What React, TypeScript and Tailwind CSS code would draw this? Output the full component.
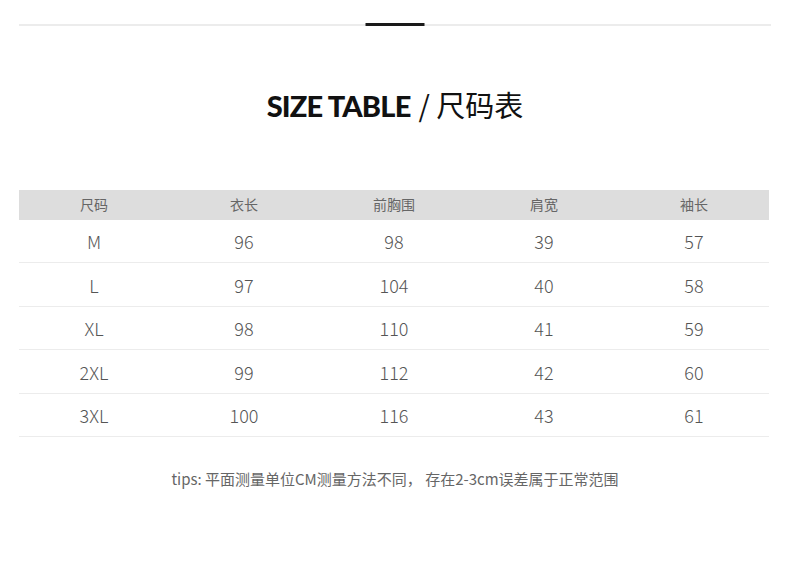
const rows = [
  ["M", "96", "98", "39", "57"],
  ["L", "97", "104", "40", "58"],
  ["XL", "98", "110", "41", "59"],
  ["2XL", "99", "112", "42", "60"],
  ["3XL", "100", "116", "43", "61"],
]

const headers = ["尺码", "衣长", "前胸围", "肩宽", "袖长"]

export default function App() {
  return (
    <div className="h-[569px] w-[790px] bg-white font-['Noto_Sans_CJK_SC','Noto_Sans',sans-serif]">
      <div className="flex justify-center px-[19px] pt-6">
        <div className="relative h-[2px] w-full bg-[#ececec]">
          <div className="absolute left-1/2 top-[-1px] h-[3px] w-[59px] -translate-x-1/2 bg-[#1a1a1a]" />
        </div>
      </div>

      <h1 className="mt-[57px] flex items-baseline justify-center text-[#111]">
        <span className="font-['Lato',sans-serif] text-[29px] font-black tracking-[-0.8px]">
          SIZE TABLE
        </span>
        <span className="ml-[8px] text-[29px] font-normal">/ 尺码表</span>
      </h1>

      <div className="ml-[19px] mt-[62px] w-[750px]">
        <div className="grid h-[30px] grid-cols-5 items-center bg-[#dddddd] text-[14px] text-[#666]">
          {headers.map((h) => (
            <div key={h} className="text-center">
              {h}
            </div>
          ))}
        </div>
        {rows.map((r) => (
          <div
            key={r[0]}
            className="grid h-[43.5px] grid-cols-5 items-center border-b border-[#ececec] pt-[2px] text-[18px] font-light text-[#555]"
          >
            {r.map((c, i) => (
              <div key={i} className="text-center">
                {c}
              </div>
            ))}
          </div>
        ))}
      </div>

      <p className="mt-[31px] text-center text-[15px] text-[#666]">
        tips: 平面测量单位CM测量方法不同， 存在2-3cm误差属于正常范围
      </p>
    </div>
  )
}
